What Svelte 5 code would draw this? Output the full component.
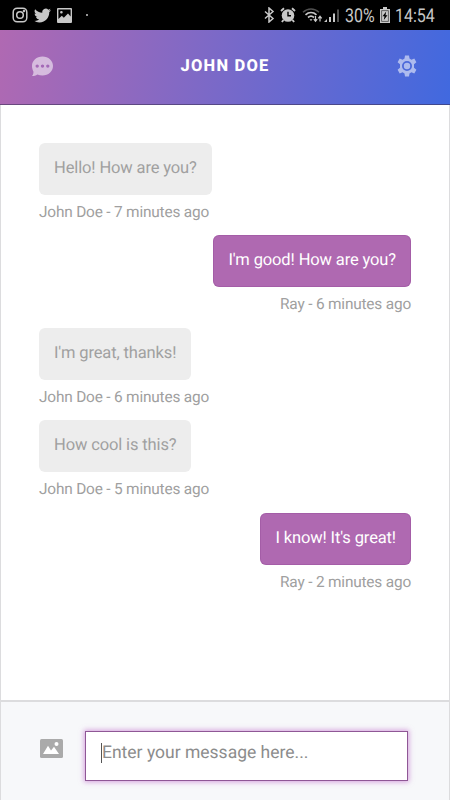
<script>
	let draft = $state("");

	const contact = "John Doe";

	const messages = [
		{ author: "John Doe", text: "Hello! How are you?", time: "7 minutes ago" },
		{ author: "Ray", text: "I'm good! How are you?", time: "6 minutes ago", mine: true },
		{ author: "John Doe", text: "I'm great, thanks!", time: "6 minutes ago" },
		{ author: "John Doe", text: "How cool is this?", time: "5 minutes ago" },
		{ author: "Ray", text: "I know! It's great!", time: "2 minutes ago", mine: true }
	];
</script>

<div class="phone">
	<div class="status-bar">
		<div class="status-left">
			<svg width="16" height="16" viewBox="0 0 16 16" fill="none" stroke="currentColor" stroke-width="1.5">
				<rect x="1.2" y="1.2" width="13.6" height="13.6" rx="4" />
				<circle cx="8" cy="8" r="3.3" />
				<circle cx="12" cy="4" r=".5" />
			</svg>
			<svg class="bird" width="17" height="17" viewBox="0 0 24 24" fill="currentColor">
				<path d="M23.95 4.57a10 10 0 0 1-2.82.77 4.96 4.96 0 0 0 2.16-2.72c-.95.55-2 .95-3.13 1.18a4.92 4.92 0 0 0-8.38 4.48A13.9 13.9 0 0 1 1.64 3.16a4.92 4.92 0 0 0 1.52 6.57 4.9 4.9 0 0 1-2.23-.61v.06a4.92 4.92 0 0 0 3.95 4.83 5 5 0 0 1-2.21.08 4.94 4.94 0 0 0 4.6 3.42A9.87 9.87 0 0 1 0 19.54a13.99 13.99 0 0 0 7.55 2.21c9.05 0 14-7.5 14-13.98v-.64a9.94 9.94 0 0 0 2.4-2.56z" />
			</svg>
			<svg width="15" height="15" viewBox="0 0 15 15">
				<path fill="currentColor" fill-rule="evenodd" d="M1 0h13a1 1 0 0 1 1 1v13a1 1 0 0 1-1 1H1a1 1 0 0 1-1-1V1a1 1 0 0 1 1-1zM1.4 1.4v9.7L4.8 7.7l2 2L11 5.6l2.6 2.8v-7zM4.4 2.9a1.3 1.3 0 1 1 0 2.6 1.3 1.3 0 0 1 0-2.6z" />
			</svg>
			<span class="dot"></span>
		</div>
		<div class="status-right">
			<svg width="11" height="16" viewBox="0 0 11 16" fill="none" stroke="currentColor" stroke-width="1.5">
				<path d="M1 4.5l8 7-4 3.5V1l4 3.5-8 7" />
			</svg>
			<svg class="alarm" width="16" height="16" viewBox="0 0 16 16">
				<circle cx="8" cy="8.5" r="6.3" fill="currentColor" />
				<path d="M1 4l3-2.7M15 4l-3-2.7M3.5 13l-1.6 2M12.5 13l1.6 2" stroke="currentColor" stroke-width="1.9" />
				<path d="M8 4.7v4h3" fill="none" stroke="#000" stroke-width="1.4" />
			</svg>
			<svg class="wifi" width="21" height="16" viewBox="0 0 21 16" fill="none" stroke="currentColor">
				<path d="M1 5.2C5.5.8 12.5.8 17 5.2" stroke-width="1.5" opacity=".4" />
				<path d="M3.5 7.8c3.3-3 7.7-3 11 0" stroke-width="1.7" />
				<path d="M6 10.5c2-1.7 4-1.7 6 0" stroke-width="1.7" />
				<path d="M7.5 12.3L9 14l1.5-1.7z" fill="currentColor" stroke="none" />
				<path d="M13.5 9v5M11.8 12.2l1.7 2 1.7-2M18 14.5v-5M16.3 11.3l1.7-2 1.7 2" stroke-width="1.2" />
			</svg>
			<svg class="signal" width="16" height="16" viewBox="0 0 16 16" fill="currentColor">
				<path d="M0 15l3-3v3zM5 10h2v5H5zM9 6.5h2V15H9z" />
				<path d="M13 2.5h2V15h-2z" opacity=".4" />
			</svg>
			<span class="battery-level"><span>30%</span></span>
			<svg class="battery" width="10" height="16" viewBox="0 0 10 16">
				<path fill="currentColor" d="M3 0h4v2h3v14H0V2h3z" />
				<path fill="none" stroke="#000" stroke-width=".5" d="M1.6 3.6h6.8v10.8H1.6z" />
				<path fill="#000" d="M6.2 4.6L2.5 9.3h2L3.8 13l3.7-4.8h-2z" />
			</svg>
			<span class="clock"><span>14:54</span></span>
		</div>
	</div>

	<header>
		<button aria-label="Conversations">
			<svg width="22" height="21" viewBox="0 0 22 21">
				<path fill="currentColor" fill-rule="evenodd" d="M10.5.5C16.4.5 21 4.700 21 10s-4.600 9.500-10.500 9.500c-1.900 0-3.600-.4-5.100-1.100C3.900 19.400 2 20 0 20c1.100-1.300 1.600-3 1.400-4.600C.5 13.800 0 12 0 10 0 4.700 4.600.5 10.500.5zM5.200 8.400a1.700 1.700 0 1 0 0 3.400 1.700 1.700 0 0 0 0-3.400zM10.500 8.400a1.700 1.700 0 1 0 0 3.400 1.700 1.700 0 0 0 0-3.400zM15.800 8.400a1.700 1.700 0 1 0 0 3.400 1.700 1.700 0 0 0 0-3.400z" />
			</svg>
		</button>
		<h1>{contact}</h1>
		<button aria-label="Settings">
			<svg width="22" height="22" viewBox="0 0 22 22">
				<g fill="currentColor">
					<path
						fill-rule="evenodd"
						d="M9 .6h4l.5 3 1.900 1.100 2.900-1.100 2.100 3.600-2.400 2v3.600l2.400 2-2.100 3.600-2.900-1.100-1.900 1.100-.5 3H9l-.5-3-1.900-1.100-2.900 1.100-2.100-3.600 2.400-2V9.200l-2.400-2 2.100-3.600 2.900 1.100 1.900-1.100zM11 6a5 5 0 1 0 0 10 5 5 0 0 0 0-10z"
					/>
					<circle cx="11" cy="11" r="3.200" />
				</g>
			</svg>
		</button>
	</header>

	<main>
		{#each messages as message}
			<div class="message" class:mine={message.mine}>
				<div class="bubble">{message.text}</div>
				<div class="meta">{message.author} - {message.time}</div>
			</div>
		{/each}
	</main>

	<footer>
		<button class="attach" aria-label="Attach image">
			<svg width="23" height="19" viewBox="0 0 23 19">
				<rect width="23" height="19" rx="1.5" fill="#aaa" />
				<path fill="#fff" d="M3 15l5-8.300 3 4.800 3-3.800 5 7.300z" />
				<circle cx="16.500" cy="5" r="2" fill="#fff" />
			</svg>
		</button>
		<div class="field">
			<span class="caret"></span>
			<input type="text" placeholder="Enter your message here..." bind:value={draft} />
		</div>
	</footer>
</div>

<style>
	:global(body) {
		margin: 0;
		background: #fff;
	}

	.phone {
		display: flex;
		flex-direction: column;
		box-sizing: border-box;
		width: 450px;
		height: 800px;
		overflow: hidden;
		font-family: Roboto, "Liberation Sans", sans-serif;
		text-rendering: geometricPrecision;
	}

	.status-bar {
		display: flex;
		justify-content: space-between;
		align-items: center;
		box-sizing: border-box;
		height: 30px;
		padding: 0 13px 0 12px;
		background: #000;
		color: #c8c8c8;
	}

	.status-left,
	.status-right {
		display: flex;
		align-items: center;
	}

	.bird {
		margin: 0 6px;
	}

	.dot {
		width: 2px;
		height: 2px;
		margin-left: 14px;
		border-radius: 50%;
		background: currentColor;
	}

	.alarm {
		margin-left: 5px;
	}

	.wifi {
		margin-left: 6px;
	}

	.signal {
		margin-left: 1px;
	}

	.battery-level,
	.clock {
		font-size: 19px;
		line-height: 31px;
		white-space: nowrap;
	}

	.battery-level {
		width: 30px;
		margin-left: 5px;
	}

	.clock {
		width: 42px;
		margin-left: 5px;
	}

	.battery-level span,
	.clock span {
		display: inline-block;
		transform: scaleX(0.84);
		transform-origin: left;
	}

	.battery {
		margin-left: 5px;
	}

	header {
		display: flex;
		justify-content: space-between;
		align-items: center;
		box-sizing: border-box;
		height: 75px;
		padding: 0 32px 2px;
		background: linear-gradient(100deg, #b069b2 0%, #4169df 100%);
		border-bottom: 1px solid rgba(60, 50, 90, 0.6);
	}

	button {
		display: flex;
		padding: 0;
		border: none;
		background: none;
		color: rgba(255, 255, 255, 0.55);
		cursor: pointer;
	}

	h1 {
		margin: 0;
		color: #fff;
		font-size: 16.5px;
		font-weight: 800;
		letter-spacing: 1.2px;
		text-transform: uppercase;
	}

	main {
		flex: 1;
		box-sizing: border-box;
		padding: 37.7px 38px 0;
		border: solid #dcdcde;
		border-width: 0 1px;
		background: #fff;
	}

	.message {
		display: flex;
		flex-direction: column;
		align-items: flex-start;
		height: 92.5px;
	}

	.message.mine {
		align-items: flex-end;
	}

	.bubble {
		box-sizing: border-box;
		height: 52px;
		padding: 0 15px;
		border-radius: 6px;
		background: #ededed;
		color: #a0a0a0;
		font-size: 16.5px;
		letter-spacing: -0.13px;
		line-height: 51px;
	}

	.mine .bubble {
		background: #af69b1;
		box-shadow: inset 0 0 0 1px rgba(130, 60, 140, 0.25);
		color: #fff;
	}

	.meta {
		margin-top: 6px;
		color: #a0a0a0;
		font-size: 15.4px;
		letter-spacing: -0.18px;
		line-height: 22px;
	}

	footer {
		display: flex;
		align-items: flex-start;
		box-sizing: border-box;
		height: 100px;
		padding: 29px 41px 0 38px;
		border: solid #dcdcde;
		border-width: 2px 1px 0;
		background: #f7f8fa;
	}

	.attach {
		margin: 8px 22px 0 1px;
	}

	.field {
		display: flex;
		flex: 1;
		box-sizing: border-box;
		height: 50px;
		padding: 11px 15px;
		border: 1px solid #8f5796;
		background: #fff;
		box-shadow: 0 0 5px 1px rgba(190, 100, 200, 0.6);
	}

	.caret {
		width: 1px;
		height: 20px;
		background: #555;
	}

	input {
		flex: 1;
		min-width: 0;
		height: 20px;
		padding: 0;
		border: none;
		outline: none;
		background: none;
		font-family: inherit;
		font-size: 17.5px;
		text-rendering: inherit;
	}

	input::placeholder {
		color: #8c8c8c;
		opacity: 1;
	}
</style>
